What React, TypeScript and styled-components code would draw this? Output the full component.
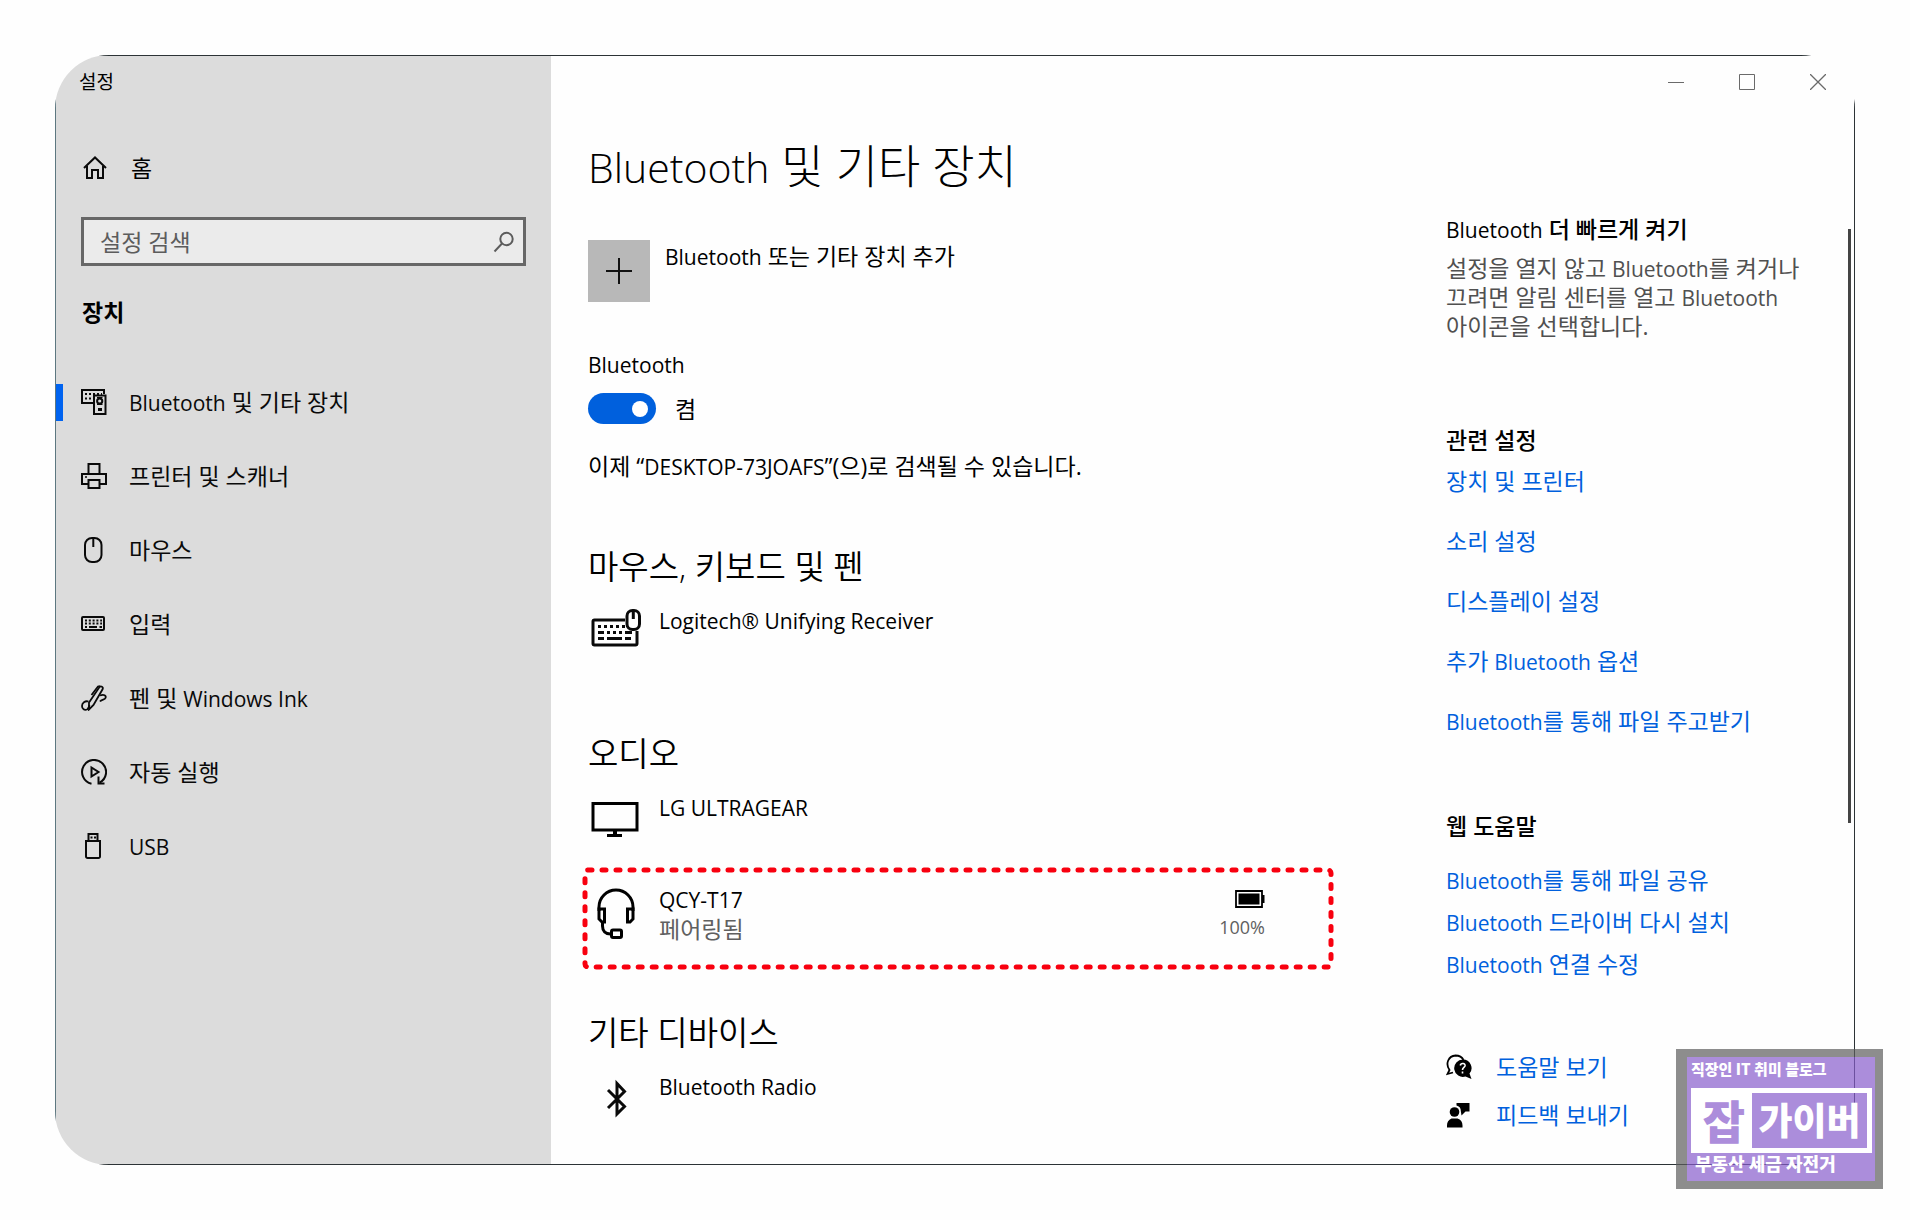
import React from 'react';
import styled, { createGlobalStyle } from 'styled-components';

const GlobalStyle = createGlobalStyle`
  *, *::before, *::after { box-sizing: border-box; }
  body {
    margin: 0;
    background: #fefefe;
    color: #000;
    font-family: 'Open Sans', 'Noto Sans CJK KR', sans-serif;
    font-size: 23px;
    line-height: 30px;
  }
  h1, h2, h3, p, ul { margin: 0; padding: 0; }
  ul { list-style: none; }
  a { text-decoration: none; }
  button { font: inherit; color: inherit; border: 0; background: none; padding: 0; cursor: pointer; }
`;

const BLUE = '#0060dd';

/* Latin runs are set a little smaller than the Hangul around them. */
const Latin = styled.span<{ $size: number }>`
  font-size: ${(p) => p.$size}px;
  line-height: 1;
`;

function Mixed({ text, size = 21 }: { text: string; size?: number }) {
  const parts = text.split(/([A-Za-z][A-Za-z0-9®\- ]*[A-Za-z0-9])/);
  return (
    <>
      {parts.map((part, i) => (i % 2 ? <Latin key={i} $size={size}>{part}</Latin> : part))}
    </>
  );
}

const Page = styled.div`
  position: relative;
  padding: 55px;
`;

const Window = styled.div`
  position: relative;
  display: flex;
  min-height: calc(100vh - 110px);
  border-radius: 54px;
  overflow: hidden;
  background: #fefefe;
  &::after {
    content: '';
    position: absolute;
    inset: 0;
    border: 1px solid #2c3336;
    border-left-color: #5d7780;
    pointer-events: none;
  }
`;

const Sidebar = styled.aside`
  flex: 0 0 496px;
  background: #dcdcdc;
  padding-top: 13px;
`;

const AppTitle = styled.div`
  height: 28px;
  line-height: 28px;
  padding-left: 24px;
  font-size: 19px;
`;

const HomeLink = styled.a`
  display: flex;
  align-items: center;
  height: 48px;
  margin-top: 48px;
  padding-left: 28px;
  color: #000;
`;

const HomeLabel = styled.span`
  margin-left: 22px;
`;

const SearchBox = styled.label`
  display: flex;
  align-items: center;
  height: 49px;
  margin: 25px 25px 0 26px;
  padding: 0 8px 0 16px;
  border: 3px solid #676767;
  background: #ebebeb;
`;

const SearchInput = styled.input`
  flex: 1;
  min-width: 0;
  border: 0;
  outline: 0;
  padding: 0;
  background: transparent;
  font: inherit;
  color: #000;
  &::placeholder { color: #5c5c5c; opacity: 1; }
`;

const SidebarHeading = styled.h2`
  margin: 29px 0 36px 27px;
  font-size: 23px;
  line-height: 34px;
  font-weight: 700;
`;

const NavLink = styled.a`
  display: flex;
  align-items: center;
  height: 74px;
  color: #0a0a0a;
`;

const Indicator = styled.span<{ $on?: boolean }>`
  width: 8px;
  height: 37px;
  margin-right: 18px;
  background: ${(p) => (p.$on ? '#0063f0' : 'transparent')};
`;

const NavIcon = styled.span`
  display: flex;
  width: 48px;
`;

const Content = styled.div`
  flex: 1;
  min-width: 0;
  display: flex;
  flex-direction: column;
`;

const Caption = styled.div`
  display: flex;
  justify-content: flex-end;
  height: 54px;
  padding-right: 2px;
`;

const CaptionButton = styled.button`
  display: flex;
  align-items: center;
  justify-content: center;
  width: 71px;
`;

const Body = styled.div`
  flex: 1;
  display: flex;
`;

const Main = styled.main`
  flex: 1;
  min-width: 0;
  padding: 28px 115px 30px 37px;
`;

const PageTitle = styled.h1`
  font-size: 46px;
  line-height: 56px;
  font-weight: 300;
`;

const AddRow = styled.button`
  display: flex;
  align-items: flex-start;
  margin-top: 47px;
  line-height: 32px;
`;

const AddTile = styled.span`
  display: flex;
  align-items: center;
  justify-content: center;
  width: 62px;
  height: 62px;
  margin-right: 15px;
  background: #b8b8b8;
`;

const FieldLabel = styled.label`
  display: block;
  margin-top: 47px;
`;

const SwitchRow = styled.div`
  display: flex;
  align-items: center;
  gap: 19px;
  height: 31px;
  margin-top: 14px;
`;

const Switch = styled.input`
  appearance: none;
  display: flex;
  align-items: center;
  justify-content: flex-end;
  width: 68px;
  height: 31px;
  margin: 0;
  padding: 0 8px;
  border-radius: 16px;
  background: ${BLUE};
  &::before {
    content: '';
    width: 16px;
    height: 16px;
    border-radius: 50%;
    background: #fff;
  }
`;

const Discoverable = styled.p`
  margin-top: 27px;
`;

const Section = styled.section<{ $gap: number }>`
  margin-top: ${(p) => p.$gap}px;
`;

const SectionTitle = styled.h2`
  font-size: 33px;
  line-height: 40px;
  font-weight: 350;
  margin-bottom: 18px;
`;

const Device = styled.div`
  display: flex;
  align-items: flex-start;
  min-height: 56px;
`;

const DeviceIcon = styled.span`
  display: flex;
  justify-content: center;
  flex: 0 0 56px;
  margin-right: 15px;
  padding-top: 4px;
`;

const DeviceText = styled.div`
  flex: 1;
`;

const DeviceStatus = styled.div`
  color: #606060;
`;

const Highlight = styled.div`
  position: relative;
  height: 97px;
  margin: 22px 0 0 -3px;
  padding: 14px 66px 0 3px;
`;

const DottedFrame = styled.svg`
  position: absolute;
  inset: 0;
  width: 100%;
  height: 100%;
  overflow: visible;
  pointer-events: none;
`;

const Battery = styled.div`
  display: flex;
  flex-direction: column;
  align-items: flex-end;
  gap: 4px;
  padding-top: 6px;
  color: #606060;
  font-size: 18px;
`;

const Aside = styled.aside`
  flex: 0 0 402px;
  padding: 105px 0 30px;
`;

const AsideTitle = styled.h3`
  font-size: 23px;
  line-height: 30px;
  font-weight: 500;
`;

const AsideText = styled.p`
  margin: 10px 0 84px;
  line-height: 29px;
  color: #505050;
  white-space: nowrap;
`;

const LinkList = styled.ul<{ $top: number; $gap: number; $bottom: number }>`
  display: flex;
  flex-direction: column;
  gap: ${(p) => p.$gap}px;
  margin: ${(p) => p.$top}px 0 ${(p) => p.$bottom}px;
`;

const TextLink = styled.a`
  color: ${BLUE};
`;

const HelpLink = styled(TextLink)`
  display: flex;
  align-items: center;
`;

const HelpIcon = styled.span`
  display: flex;
  width: 50px;
`;

const ScrollThumb = styled.div`
  width: 3px;
  height: 594px;
  margin: 120px 4px 0 0;
  background: #444;
`;

const Watermark = styled.div`
  position: absolute;
  right: 27px;
  bottom: 31px;
  width: 207px;
  height: 140px;
  padding: 0 3px 0 4px;
  border: 8px solid rgba(92, 92, 92, 0.7);
  border-left-width: 11px;
  background: rgba(136, 92, 204, 0.7);
  background-clip: padding-box;
  color: #fff;
  font-family: 'Noto Sans CJK KR', sans-serif;
  font-weight: 900;
  white-space: nowrap;
`;

const MarkTop = styled.div`
  height: 31px;
  font-size: 15px;
  line-height: 24px;
`;

const MarkFrame = styled.div`
  display: flex;
  height: 65px;
  border: 5px solid #fff;
  line-height: 52px;
`;

const MarkLeft = styled.div`
  width: 56px;
  background: #fff;
  color: #ac8ddb;
  font-size: 46px;
  text-align: center;
`;

const MarkRight = styled.div`
  flex: 1;
  font-size: 37px;
  text-align: center;
`;

const MarkBottom = styled.div`
  padding-left: 4px;
  font-size: 18px;
  line-height: 21px;
`;

const Stroke = ({ w = 26, h = 26, sw = 2, children }: { w?: number; h?: number; sw?: number; children: React.ReactNode }) => (
  <svg width={w} height={h} viewBox={`0 0 ${w} ${h}`} fill="none" stroke="#0a0a0a" strokeWidth={sw} aria-hidden="true">
    {children}
  </svg>
);

const HomeIcon = () => (
  <Stroke>
    <path d="M1 13 12 2.500 23 13" />
    <path d="M4 11v12h5v-8h6v8h5V11" />
  </Stroke>
);

const SearchIcon = () => (
  <svg width="22" height="22" viewBox="0 0 22 22" fill="none" stroke="#5c5c5c" strokeWidth="2" aria-hidden="true">
    <circle cx="13.500" cy="8" r="6.200" />
    <path d="M9 12.500 1.500 20.500" />
  </svg>
);

const DevicesIcon = () => (
  <Stroke>
    <path d="M12 14H1V1h22v4" />
    <path d="M4 5h17M4 9.500h8" strokeDasharray="2 2" />
    <path d="M13 6.500h11.500V25H13z" />
    <circle cx="18.700" cy="12" r="2.600" />
    <path d="M16 8.500h5.500M16 15.500h5.500" strokeWidth="1" />
    <path d="M17 20.500h4" strokeWidth="3" />
  </Stroke>
);

const PrinterIcon = () => (
  <Stroke>
    <path d="M7.500 11V1h11v10" />
    <path d="M7 21H1V11h24v10h-6" />
    <path d="M7.500 17h11v8h-11z" />
    <path d="M4 14h2" strokeWidth="1.500" />
  </Stroke>
);

const MouseIcon = () => (
  <Stroke>
    <rect x="4" y="1" width="16.500" height="24" rx="7" />
    <path d="M12.300 1v9" />
  </Stroke>
);

const KeyboardIcon = () => (
  <Stroke>
    <rect x="1" y="6" width="22" height="13" rx="1" />
    <path d="M4 9.500h17M4 12.500h17" strokeDasharray="2 1.800" />
    <path d="M4 16h2M8 16h8M18.500 16h2.500" />
  </Stroke>
);

const PenIcon = () => (
  <Stroke sw={1.8}>
    <path d="M7.500 16.500C4 15.500 1 18 1 21s2.500 4.500 5 3.500c1.500-.8 2-2.500 2.500-4.500" />
    <path d="M8 24.500V17.500L18.500 2c1.500-1.500 4 0 3.200 2L12.500 20z" />
    <path d="m10.500 10 6.500-8.500 2-.5" />
    <path d="M19 10.500c4-1.500 6.500 0 5.500 2.500-.8 2-4 1-5.500 3.500" />
  </Stroke>
);

const AutoplayIcon = () => (
  <Stroke>
    <path d="M10.500 24.700A12 12 0 1 1 18.500 23.700" />
    <path d="M17.500 17.500v7h6" />
    <path d="M10.500 8.500v9l7-4.500z" />
  </Stroke>
);

const UsbIcon = () => (
  <Stroke>
    <path d="M7.500 8V1h9v7" />
    <path d="M5 8h14v15.500a1.500 1.500 0 0 1-1.500 1.500h-11A1.500 1.500 0 0 1 5 23.500z" />
    <path d="M9.500 4.500h2M13 4.500h2" />
  </Stroke>
);

const ReceiverIcon = () => (
  <Stroke w={50} h={38} sw={3}>
    <path d="M34 11H3.500A1.500 1.500 0 0 0 2 12.500v22A1.500 1.500 0 0 0 3.500 36h41a1.500 1.500 0 0 0 1.500-1.500V22" />
    <path d="M7 17.500h27" strokeDasharray="3 3" />
    <path d="M7 23.500h6M16 23.500h3M22 23.500h3M28 23.500h3M34 23.500h7M7 29.500h6M16 29.500h15M34 29.500h6" />
    <rect x="36" y="1.500" width="12.500" height="19" rx="5.500" />
    <path d="M42.300 2v8" />
  </Stroke>
);

const MonitorIcon = () => (
  <svg width="50" height="42" viewBox="0 0 50 42" aria-hidden="true">
    <path d="M2 7.500h44v26.500H2z" fill="none" stroke="#000" strokeWidth="3" />
    <path d="M22 34h4v4h5v3H16v-3h6z" />
  </svg>
);

const HeadsetIcon = () => (
  <svg width="38" height="52" viewBox="0 0 38 52" fill="none" stroke="#000" strokeWidth="3" aria-hidden="true">
    <path d="M2 23V19a17 17 0 0 1 34 0v4" />
    <path d="M2 21h5.500v13H5L2 31zM36 21h-5.500v13H33l3-3z" />
    <path d="M5.500 34v4c0 5 3 8 8 8" />
    <rect x="14.500" y="42" width="10" height="7.500" rx="1.500" />
  </svg>
);

const BluetoothIcon = () => (
  <Stroke w={24} h={44} sw={3}>
    <path d="m4 15 16.500 16.500-7.500 7.500V8.500l7.500 8L4 33" />
  </Stroke>
);

const BatteryIcon = () => (
  <svg width="30" height="18" viewBox="0 0 30 18" aria-hidden="true">
    <path d="M1 1h26v16H1z" fill="none" stroke="#000" strokeWidth="1.800" />
    <path d="M3.500 3.500h21v11h-21z" fill="#000" />
    <path d="M27 5h2.500v8H27z" fill="#000" />
  </svg>
);

const GetHelpIcon = () => (
  <svg width="26" height="26" viewBox="0 0 26 26" aria-hidden="true">
    <path d="M7 18.500 1.500 20 3.500 16C-1 9.500 2.500 2 9.500 1.500c4 0 6.500 1.500 8 4.500" fill="none" stroke="#000" strokeWidth="1.800" />
    <path d="M17 5.500a8.500 8.500 0 0 1 6.500 14l2 5.500-6-2.500A8.700 8.700 0 1 1 17 5.500z" />
    <path d="M14.300 11.500c.5-3 5.500-2.500 4.700.5-.6 1.500-2.500 1.500-2.500 4M16.500 17.500v2" fill="none" stroke="#fff" strokeWidth="1.600" />
  </svg>
);

const FeedbackIcon = () => (
  <svg width="26" height="26" viewBox="0 0 26 26" aria-hidden="true">
    <circle cx="8.500" cy="10" r="4.800" />
    <path d="M1 25.500v-2A7.500 7.500 0 0 1 5.500 16.500h6a7.500 7.500 0 0 1 5 7v2z" />
    <path d="M10.500 1H23.500v8.500h-4l-4 4-.7-4.500C15 6 13 4 10.500 3.500z" />
  </svg>
);

const navItems = [
  { label: 'Bluetooth 및 기타 장치', icon: <DevicesIcon />, on: true },
  { label: '프린터 및 스캐너', icon: <PrinterIcon /> },
  { label: '마우스', icon: <MouseIcon /> },
  { label: '입력', icon: <KeyboardIcon /> },
  { label: '펜 및 Windows Ink', icon: <PenIcon /> },
  { label: '자동 실행', icon: <AutoplayIcon /> },
  { label: 'USB', icon: <UsbIcon /> },
];

const related = ['장치 및 프린터', '소리 설정', '디스플레이 설정', '추가 Bluetooth 옵션', 'Bluetooth를 통해 파일 주고받기'];
const webHelp = ['Bluetooth를 통해 파일 공유', 'Bluetooth 드라이버 다시 설치', 'Bluetooth 연결 수정'];

function Links({ items, top, gap, bottom }: { items: string[]; top: number; gap: number; bottom: number }) {
  return (
    <LinkList $top={top} $gap={gap} $bottom={bottom}>
      {items.map((t) => (
        <li key={t}>
          <TextLink href="#"><Mixed text={t} /></TextLink>
        </li>
      ))}
    </LinkList>
  );
}

function DeviceRow({ icon, name }: { icon: React.ReactNode; name: string }) {
  return (
    <Device>
      <DeviceIcon>{icon}</DeviceIcon>
      <DeviceText><Mixed text={name} /></DeviceText>
    </Device>
  );
}

export default function App() {
  return (
    <Page>
      <GlobalStyle />
      <Window>
        <Sidebar>
          <AppTitle>설정</AppTitle>
          <HomeLink href="#"><HomeIcon /><HomeLabel>홈</HomeLabel></HomeLink>
          <SearchBox>
            <SearchInput type="text" placeholder="설정 검색" aria-label="설정 검색" />
            <SearchIcon />
          </SearchBox>
          <SidebarHeading>장치</SidebarHeading>
          <nav>
            {navItems.map((n) => (
              <NavLink key={n.label} href="#">
                <Indicator $on={n.on} />
                <NavIcon>{n.icon}</NavIcon>
                <span><Mixed text={n.label} /></span>
              </NavLink>
            ))}
          </nav>
        </Sidebar>
        <Content>
          <Caption>
            <CaptionButton aria-label="최소화">
              <svg width="16" height="16" fill="none" stroke="#6a6a6a"><path d="M0 8.500h16" /></svg>
            </CaptionButton>
            <CaptionButton aria-label="최대화">
              <svg width="16" height="16" fill="none" stroke="#6a6a6a"><path d="M.5.5h15v15H.5z" /></svg>
            </CaptionButton>
            <CaptionButton aria-label="닫기">
              <svg width="16" height="16" fill="none" stroke="#6a6a6a" strokeWidth="1.300"><path d="m0 0 16 16M16 0 0 16" /></svg>
            </CaptionButton>
          </Caption>
          <Body>
            <Main>
              <PageTitle><Mixed text="Bluetooth 및 기타 장치" size={41} /></PageTitle>
              <AddRow>
                <AddTile>
                  <svg width="26" height="26" stroke="#111" strokeWidth="2" aria-hidden="true"><path d="M0 13h26M13 0v26" /></svg>
                </AddTile>
                <span><Mixed text="Bluetooth 또는 기타 장치 추가" /></span>
              </AddRow>
              <FieldLabel htmlFor="bt"><Mixed text="Bluetooth" /></FieldLabel>
              <SwitchRow>
                <Switch id="bt" type="checkbox" role="switch" defaultChecked />
                <span>켬</span>
              </SwitchRow>
              <Discoverable><Mixed text="이제 “DESKTOP-73JOAFS”(으)로 검색될 수 있습니다." /></Discoverable>

              <Section $gap={66}>
                <SectionTitle>마우스, 키보드 및 펜</SectionTitle>
                <DeviceRow icon={<ReceiverIcon />} name="Logitech® Unifying Receiver" />
              </Section>

              <Section $gap={73}>
                <SectionTitle>오디오</SectionTitle>
                <DeviceRow icon={<MonitorIcon />} name="LG ULTRAGEAR" />
                <Highlight>
                  <DottedFrame aria-hidden="true">
                    <rect width="100%" height="100%" rx="3" fill="none" stroke="#f8000f" strokeWidth="5" strokeLinecap="round" strokeDasharray="4 10" />
                  </DottedFrame>
                  <Device>
                    <DeviceIcon><HeadsetIcon /></DeviceIcon>
                    <DeviceText>
                      <Mixed text="QCY-T17" />
                      <DeviceStatus>페어링됨</DeviceStatus>
                    </DeviceText>
                    <Battery>
                      <BatteryIcon />
                      <span>100%</span>
                    </Battery>
                  </Device>
                </Highlight>
              </Section>

              <Section $gap={46}>
                <SectionTitle>기타 디바이스</SectionTitle>
                <DeviceRow icon={<BluetoothIcon />} name="Bluetooth Radio" />
              </Section>
            </Main>
            <Aside>
              <AsideTitle><Mixed text="Bluetooth 더 빠르게 켜기" /></AsideTitle>
              <AsideText>
                <Mixed text="설정을 열지 않고 Bluetooth를 켜거나" /><br />
                <Mixed text="끄려면 알림 센터를 열고 Bluetooth" /><br />
                아이콘을 선택합니다.
              </AsideText>
              <AsideTitle>관련 설정</AsideTitle>
              <Links items={related} top={11} gap={30} bottom={75} />
              <AsideTitle>웹 도움말</AsideTitle>
              <Links items={webHelp} top={24} gap={12} bottom={73} />
              <LinkList $top={0} $gap={18} $bottom={0}>
                <li><HelpLink href="#"><HelpIcon><GetHelpIcon /></HelpIcon>도움말 보기</HelpLink></li>
                <li><HelpLink href="#"><HelpIcon><FeedbackIcon /></HelpIcon>피드백 보내기</HelpLink></li>
              </LinkList>
            </Aside>
            <ScrollThumb />
          </Body>
        </Content>
      </Window>
      <Watermark>
        <MarkTop>직장인 IT 취미 블로그</MarkTop>
        <MarkFrame>
          <MarkLeft>잡</MarkLeft>
          <MarkRight>가이버</MarkRight>
        </MarkFrame>
        <MarkBottom>부동산 세금 자전거</MarkBottom>
      </Watermark>
    </Page>
  );
}
